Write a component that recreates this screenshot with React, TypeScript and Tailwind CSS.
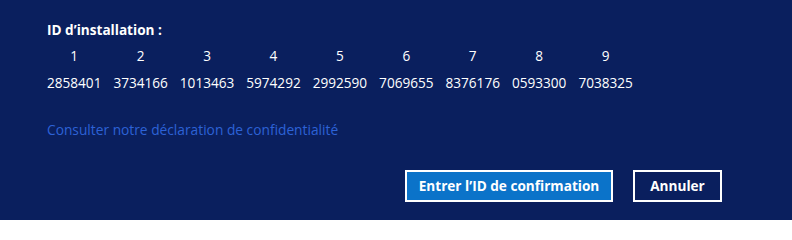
const installId = [
  '2858401', '3734166', '1013463', '5974292', '2992590',
  '7069655', '8376176', '0593300', '7038325',
];

export default function App() {
  return (
    <div
      className="w-[792px] h-[220px] bg-[#0a1f5e] text-white overflow-hidden"
      style={{ fontFamily: '"Segoe UI", "Open Sans", "Noto Sans", sans-serif' }}
    >
      <div className="pl-[47px] pt-[20px]">
        <h2 className="text-[13.6px] leading-[20px] font-bold">ID d’installation :</h2>

        {/* Blocs de l'ID */}
        <div className="mt-[6px] flex gap-[12px] text-[13.6px] leading-[20px]">
          {installId.map((block, i) => (
            <div key={i} className="flex flex-col items-center">
              <span>{i + 1}</span>
              <span className="mt-[7px]">{block}</span>
            </div>
          ))}
        </div>

        <a href="#" className="block mt-[27px] text-[13.75px] leading-[20px] text-[#2d62d6]">
          Consulter notre déclaration de confidentialité
        </a>
      </div>

      <div className="mt-[30px] pr-[70px] flex justify-end gap-[20px]">
        <button className="w-[208px] h-[32px] border-2 border-white bg-[#0b73c9] text-[13.6px] font-bold text-white">
          Entrer l’ID de confirmation
        </button>
        <button className="w-[89px] h-[32px] border-2 border-white bg-[#0a1f5e] text-[13.6px] font-bold text-white">
          Annuler
        </button>
      </div>
    </div>
  );
}
